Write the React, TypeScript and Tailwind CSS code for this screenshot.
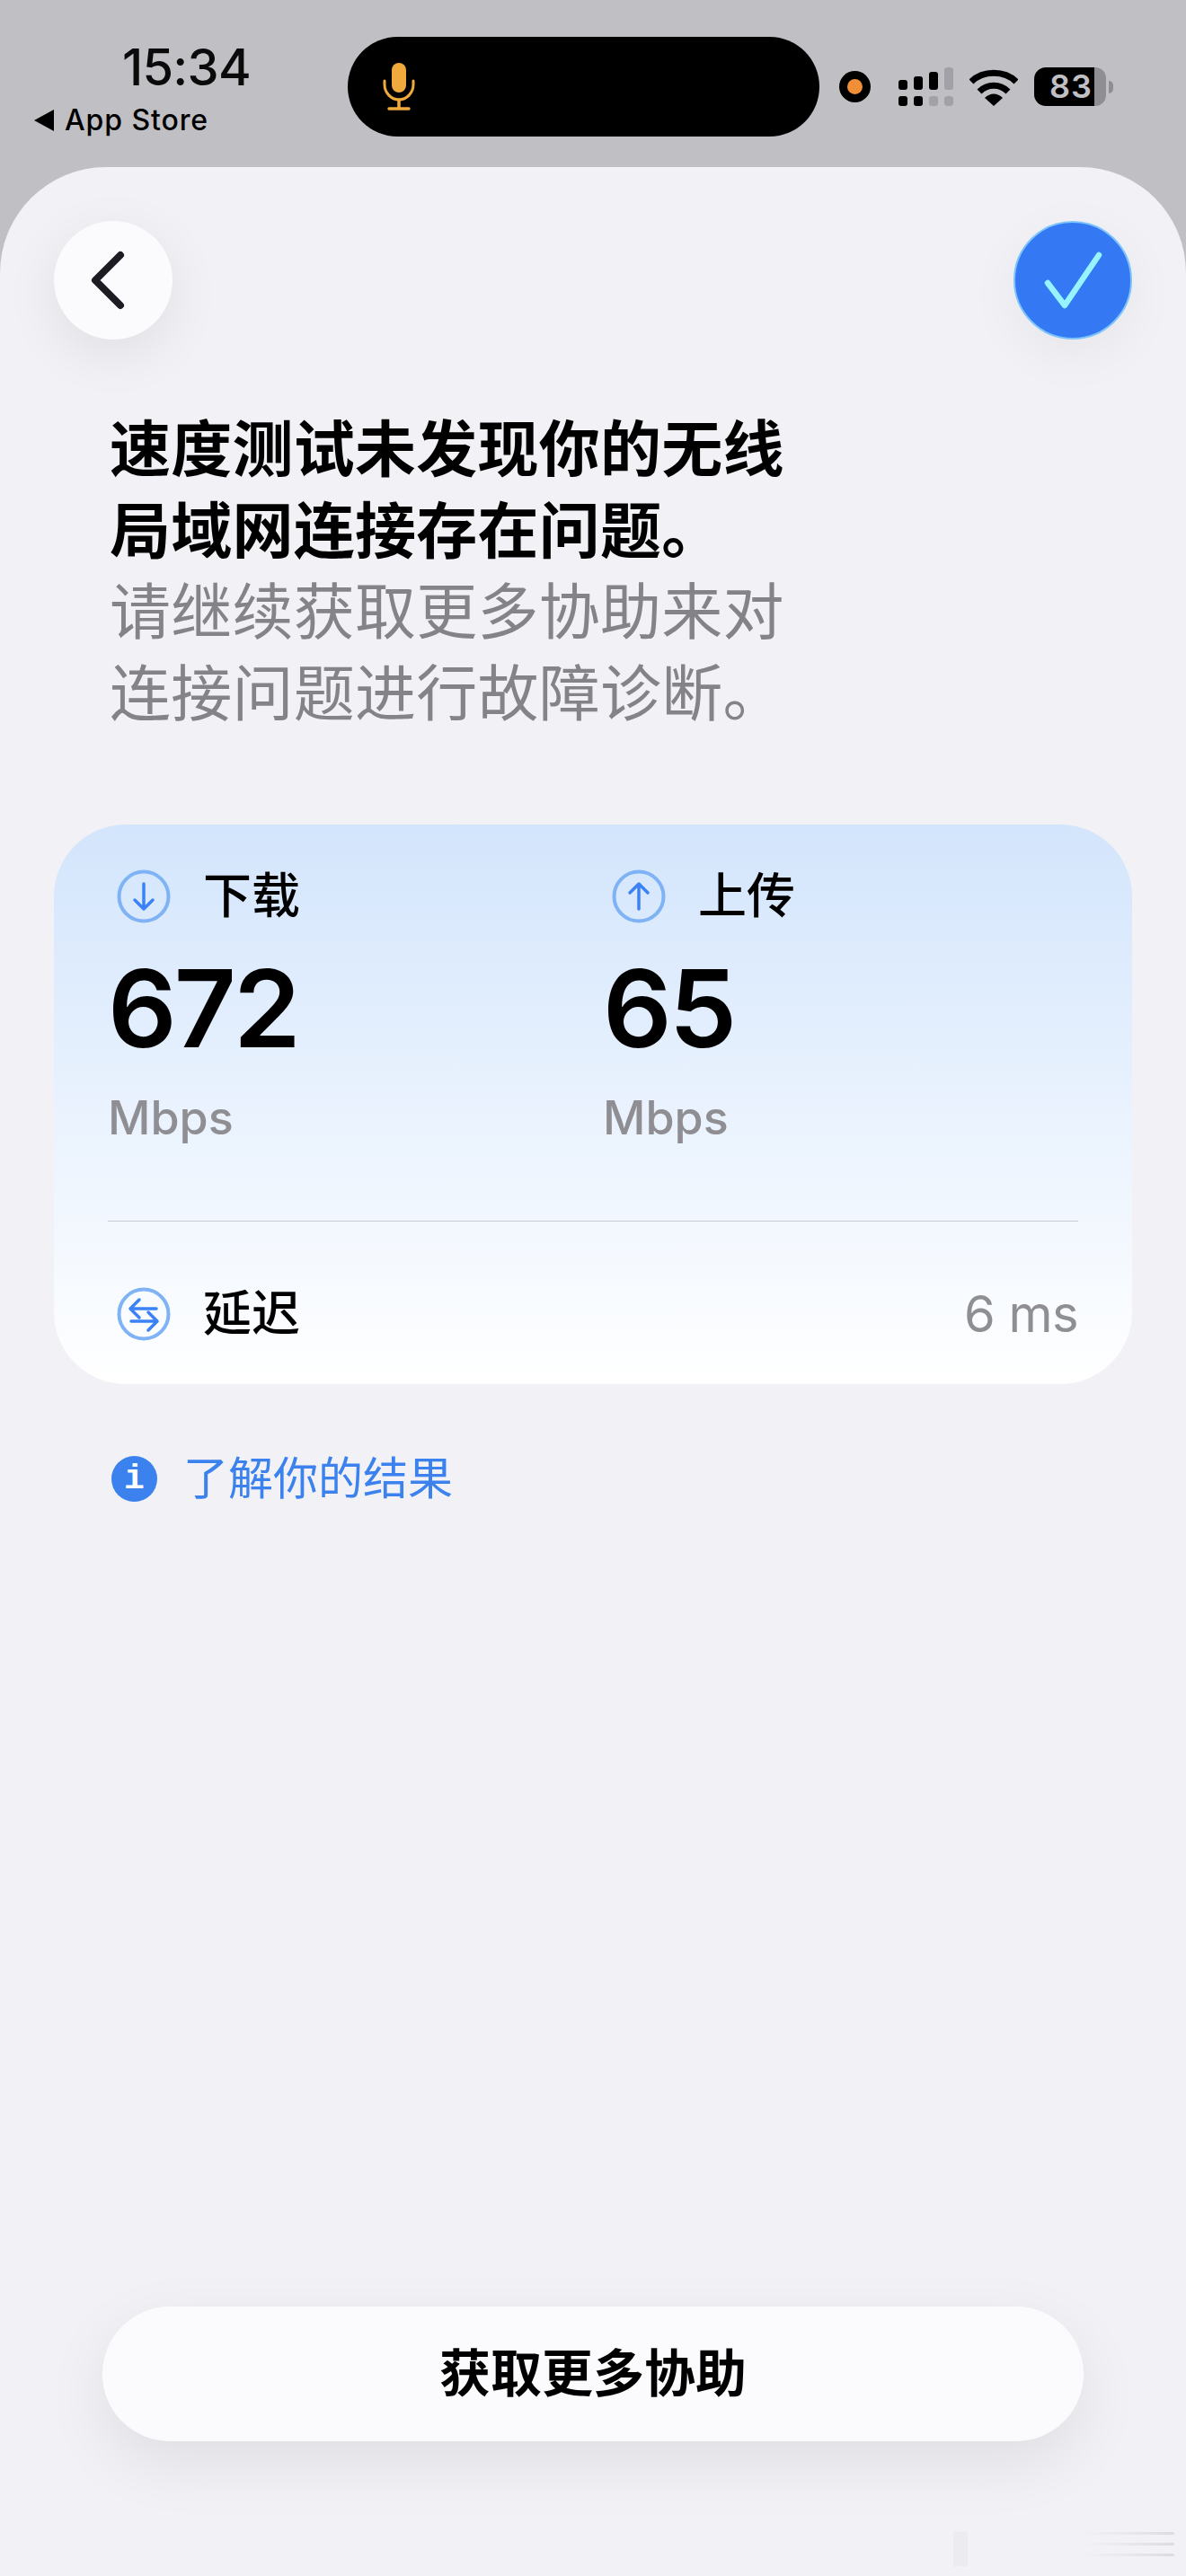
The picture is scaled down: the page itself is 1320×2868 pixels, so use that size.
const cjk = "font-['Inter','Noto_Sans_CJK_SC',sans-serif]";

function CircleIcon({ children }: { children: React.ReactNode }) {
  return (
    <svg viewBox="0 0 60 60" className="w-[60px] h-[60px] shrink-0" fill="none" strokeLinecap="round" strokeLinejoin="round">
      <circle cx="30" cy="30" r="27.5" stroke="#7fb3f5" strokeWidth="4" />
      {children}
    </svg>
  );
}

function SignalIcon() {
  return (
    <svg viewBox="0 0 61 43" className="w-[61px] h-[43px]">
      <rect x="0" y="14" width="10" height="11" rx="3" fill="#000" />
      <rect x="17" y="10" width="10" height="15" rx="3" fill="#000" />
      <rect x="34" y="5" width="10" height="20" rx="3" fill="#000" />
      <rect x="51" y="0" width="10" height="25" rx="3" fill="#a2a2a6" />
      <rect x="0" y="32" width="10" height="11" rx="3" fill="#000" />
      <rect x="17" y="32" width="10" height="11" rx="3" fill="#000" />
      <rect x="34" y="32" width="10" height="11" rx="3" fill="#a2a2a6" />
      <rect x="51" y="32" width="10" height="11" rx="3" fill="#a2a2a6" />
    </svg>
  );
}

function WifiIcon() {
  return (
    <svg viewBox="0 0 54 42" className="w-[54px] h-[42px]" fill="none" stroke="#000" strokeWidth="7">
      <path d="M2 15C15 2 39 2 52 15" />
      <path d="M11 26C20 17 34 17 43 26" />
      <path d="M17 33C23 27 31 27 37 33L27 42Z" fill="#000" strokeWidth="0" />
    </svg>
  );
}

function Metric({ label, value, icon }: { label: string; value: string; icon: React.ReactNode }) {
  return (
    <div className="w-[551px] shrink-0">
      <div className="flex items-center gap-[36px] pl-[10px] h-[60px]">
        {icon}
        <span className="text-[54px] leading-[60px] font-medium text-black">{label}</span>
      </div>
      <div className="mt-[40px] text-[120px] leading-[110px] font-semibold text-black tracking-[-3px]">{value}</div>
      <div className="mt-[37px] text-[52px] leading-[60px] font-medium text-[#8e8e93]">Mbps</div>
    </div>
  );
}

export default function App() {
  return (
    <div className={`${cjk} relative w-[1320px] h-[2868px] bg-[#c0bfc4] overflow-hidden flex flex-col`}>
      {/* Status bar */}
      <div className="h-[186px] shrink-0 flex items-start">
        <div className="w-[387px] pl-[38px] pt-[42px] shrink-0">
          <div className="ml-[98px] text-[56px] leading-[66px] font-medium text-[#0a0a0a] tracking-[-0.75px]">15:34</div>
          <div className="flex items-center gap-[12px] mt-[4px]">
            <span className="w-0 h-0 border-y-[12px] border-y-transparent border-r-[22px] border-r-black" />
            <span className="text-[32px] leading-[44px] font-medium text-black tracking-[0.9px]">App Store</span>
          </div>
        </div>
        <div className="mt-[41px] w-[525px] h-[111px] rounded-[56px] bg-black flex items-center pl-[39px] shrink-0">
          <svg viewBox="0 0 36 54" className="w-[36px] h-[54px]" fill="none">
            <rect x="10" y="0" width="16" height="33" rx="8" fill="#f0a93c" />
            <path d="M2 20V24C2 33 9 41 18 41C27 41 34 33 34 24V20" stroke="#f0a93c" strokeWidth="3" strokeLinecap="round" />
            <path d="M18 41V50M7 51H29" stroke="#f0a93c" strokeWidth="3.5" strokeLinecap="round" />
          </svg>
        </div>
        <div className="flex items-center ml-[22px] mt-[75px] h-[43px]">
          <div className="w-[35px] h-[35px] rounded-full bg-black flex items-center justify-center">
            <span className="w-[17px] h-[17px] rounded-full bg-[#f08f38]" />
          </div>
          <div className="ml-[31px]"><SignalIcon /></div>
          <div className="ml-[18px]"><WifiIcon /></div>
          <div className="ml-[18px] flex items-center">
            <div className="w-[67px] h-[43px] bg-black rounded-l-[13px] text-[#c0bfc4] text-[36px] leading-[43px] font-semibold text-right pr-[2px] tracking-[1px]">83</div>
            <div className="w-[13px] h-[43px] bg-[#8f8f93] rounded-r-[12px]" />
            <div className="ml-[3px] w-[5px] h-[14px] bg-[#8f8f93] rounded-r-[5px]" />
          </div>
        </div>
      </div>

      {/* Sheet */}
      <div className="flex-1 bg-[#f1f1f6] rounded-t-[118px] px-[60px] pt-[60px] flex flex-col">
        <div className="flex items-center justify-between h-[132px]">
          <button className="w-[132px] h-[132px] rounded-full bg-[#fbfbfe] flex items-center justify-center shadow-[0_16px_60px_rgba(0,0,0,0.08)]">
            <svg viewBox="0 0 40 66" className="w-[40px] h-[66px] mr-[11px]" fill="none" stroke="#1c1c22" strokeWidth="8" strokeLinecap="round" strokeLinejoin="round">
              <path d="M33 5L5 33L33 61" />
            </svg>
          </button>
          <button className="w-[132px] h-[132px] rounded-full bg-[#3478f3] border-2 border-[#7cc4fb] flex items-center justify-center shadow-[0_16px_60px_rgba(0,0,0,0.05)]">
            <svg viewBox="0 0 66 66" className="w-[66px] h-[66px]" fill="none" stroke="#97f4ff" strokeWidth="6.5" strokeLinecap="round" strokeLinejoin="round">
              <path d="M5 36L24 61L62 5" />
            </svg>
          </button>
        </div>

        <div className="mt-[77px] pl-[62px] text-[68px] leading-[90.5px] tracking-[0.25px]">
          <div className="font-bold text-black">速度测试未发现你的无线<br />局域网连接存在问题。</div>
          <div className="text-[#838388]">请继续获取更多协助来对<br />连接问题进行故障诊断。</div>
        </div>

        <div className="mt-[101px] h-[623px] rounded-[80px] bg-gradient-to-b from-[#d3e5fc] to-white px-[60px] pt-[50px]">
          <div className="flex h-[391px]">
            <Metric
              label="下载"
              value="672"
              icon={
                <CircleIcon>
                  <path d="M30 16V44M20 34L30 44L40 34" stroke="#3b82f6" strokeWidth="3.5" />
                </CircleIcon>
              }
            />
            <Metric
              label="上传"
              value="65"
              icon={
                <CircleIcon>
                  <path d="M30 44V16M20 26L30 16L40 26" stroke="#3b82f6" strokeWidth="3.5" />
                </CircleIcon>
              }
            />
          </div>
          <div className="h-[1px] bg-[#c6cad9]" />
          <div className="mt-[73px] flex items-center justify-between pl-[10px] h-[60px]">
            <div className="flex items-center gap-[36px]">
              <CircleIcon>
                <path d="M44 24H17M25 14L15 24L25 34M16 38H43M35 28L45 38L35 48" stroke="#3b82f6" strokeWidth="3.5" />
              </CircleIcon>
              <span className="text-[54px] leading-[60px] font-medium text-black">延迟</span>
            </div>
            <span className="text-[56px] leading-[60px] text-[#8e8e93] tracking-[-0.5px]">6 ms</span>
          </div>
        </div>

        <div className="mt-[77px] pl-[64px] flex items-center gap-[29px]">
          <div className="w-[51px] h-[51px] rounded-full bg-[#3b82ee] flex items-center justify-center text-white text-[38px] leading-[51px] font-bold font-['Liberation_Mono',monospace]">i</div>
          <span className="text-[50px] leading-[56px] text-[#3b82ee]">了解你的结果</span>
        </div>

        <div className="flex-1" />

        <button className="mx-[54px] mb-[150px] h-[150px] rounded-[75px] bg-[#fbfbfe] text-[57px] font-semibold text-black shadow-[0_24px_70px_rgba(0,0,0,0.08)]">
          获取更多协助
        </button>
      </div>

      {/* faint watermark in the corner */}
      <svg viewBox="0 0 250 48" className="absolute left-[1061px] top-[2811px] w-[250px] h-[48px]" fill="none">
        <defs>
          <linearGradient id="fade" x1="0" x2="1" y1="0" y2="0">
            <stop offset="0" stopColor="#e2e2e6" stopOpacity="0" />
            <stop offset="1" stopColor="#dcdce0" />
          </linearGradient>
        </defs>
        <rect x="0" y="8" width="16" height="38" fill="#ececf0" />
        <rect x="140" y="8" width="106" height="3" rx="1.5" fill="url(#fade)" />
        <rect x="140" y="20" width="106" height="3" rx="1.5" fill="url(#fade)" />
        <rect x="140" y="32" width="106" height="3" rx="1.5" fill="url(#fade)" />
      </svg>
    </div>
  );
}
